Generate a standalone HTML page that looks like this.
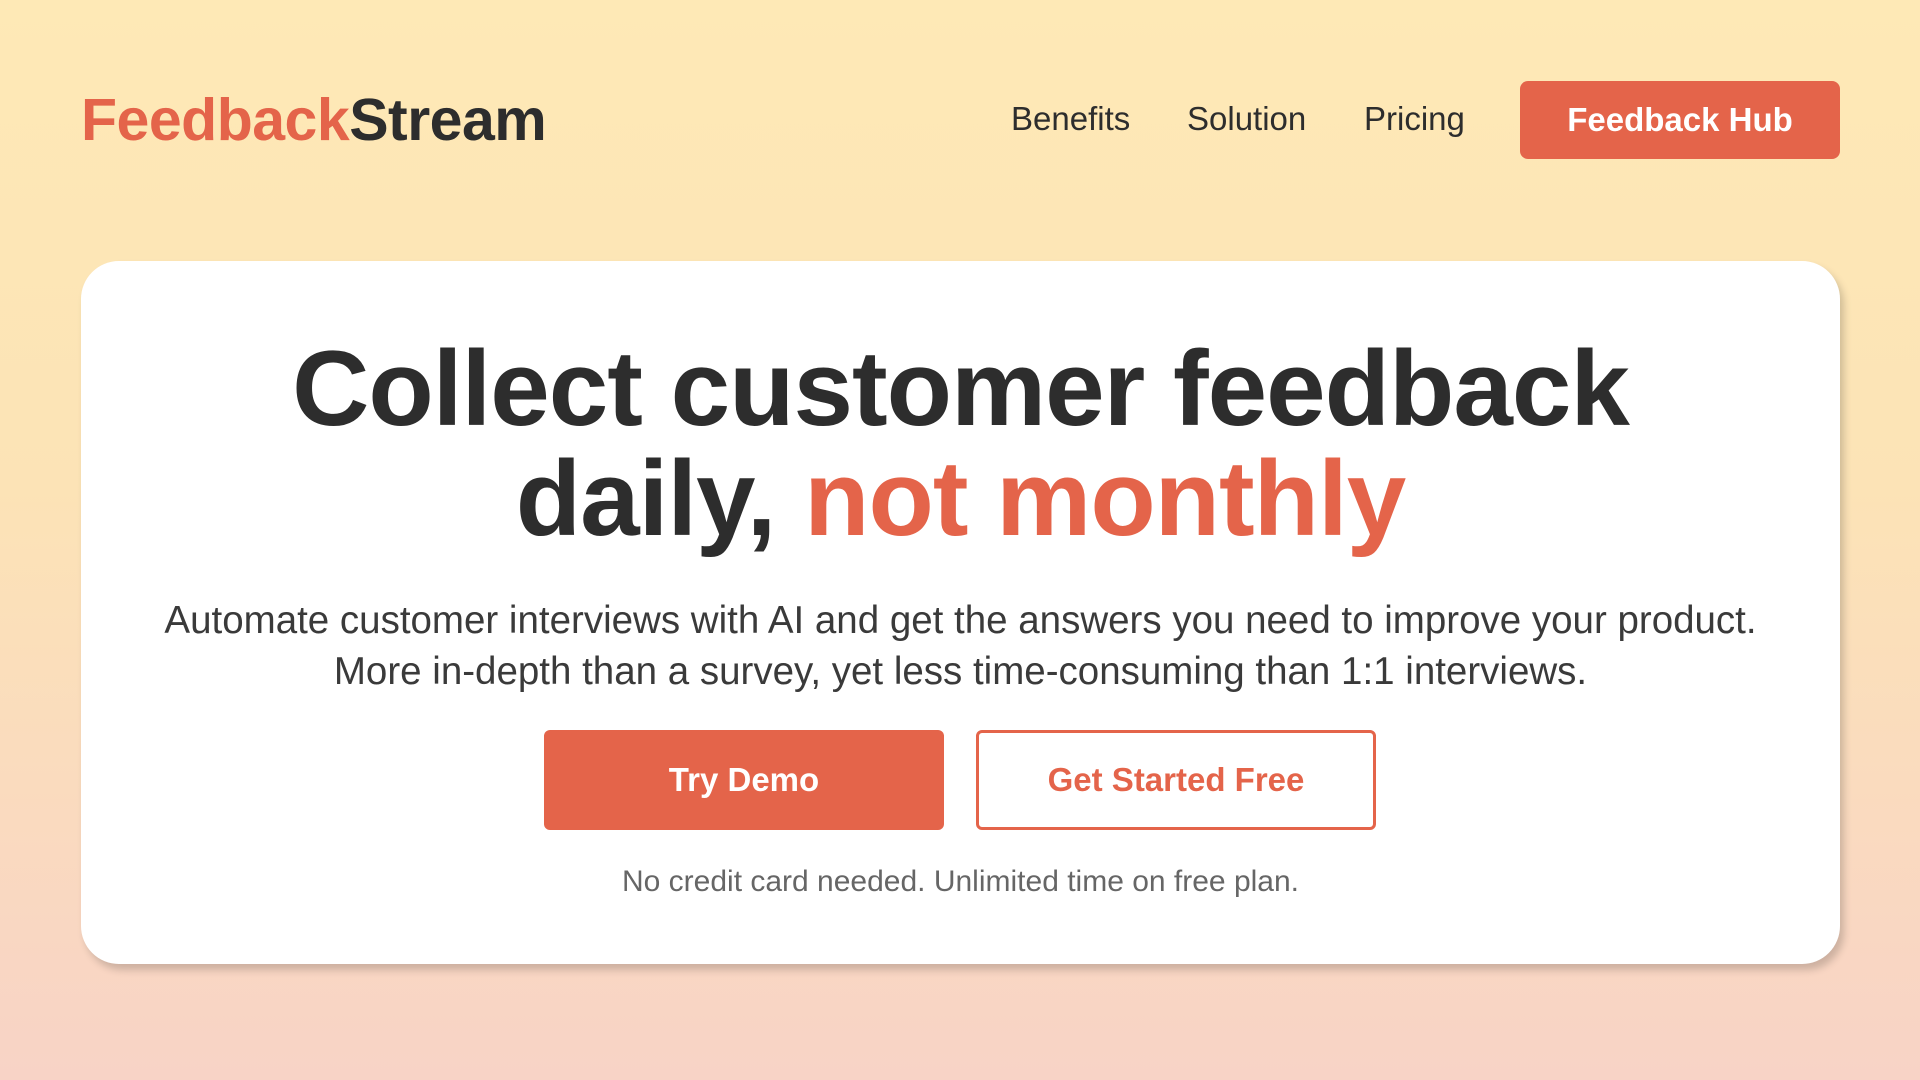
<!DOCTYPE html>
<html><head><meta charset="utf-8"><style>
*{margin:0;padding:0;box-sizing:border-box}
html,body{width:1920px;height:1080px;overflow:hidden}
body{font-family:"Liberation Sans",sans-serif;background:linear-gradient(180deg,#fee9b6 0%,#fce3b6 45%,#f8d3c6 100%);color:#2d2d2d;position:relative}
.logo{position:absolute;left:81px;top:86px;font-size:59px;font-weight:bold;letter-spacing:-0.5px}
.logo span{color:#e4644a}
.nav{position:absolute;top:100px;font-size:33px;color:#2d2d2d}
.hub{position:absolute;left:1520px;top:81px;width:320px;height:78px;background:#e4644a;color:#fff;border-radius:8px;font-size:33px;font-weight:bold;display:flex;align-items:center;justify-content:center}
.card{position:absolute;left:81px;top:261px;width:1759px;height:703px;background:#fff;border-radius:38px;box-shadow:4px 6px 8px rgba(0,0,0,.18);text-align:center}
h1{font-size:107px;line-height:110px;margin-top:72px;font-weight:bold;color:#2d2d2d;letter-spacing:-1px}
h1 span{color:#e4644a}
.sub{font-size:38.5px;line-height:51px;margin-top:42px;color:#3a3a3a}
.btn{position:absolute;top:469px;width:400px;height:100px;border-radius:6px;font-size:33px;font-weight:bold;display:flex;align-items:center;justify-content:center}
.b1{left:463px;background:#e4644a;color:#fff}
.b2{left:895px;border:3px solid #e4644a;color:#e4644a;background:#fff}
.note{position:absolute;top:604px;left:0;width:100%;font-size:30px;color:#666}
</style></head><body>
<div class="logo"><span>Feedback</span>Stream</div>
<div class="nav" style="left:1011px">Benefits</div>
<div class="nav" style="left:1187px">Solution</div>
<div class="nav" style="left:1364px">Pricing</div>
<div class="hub">Feedback Hub</div>
<div class="card">
<h1>Collect customer feedback<br>daily, <span>not monthly</span></h1>
<p class="sub">Automate customer interviews with AI and get the answers you need to improve your product.<br>More in-depth than a survey, yet less time-consuming than 1:1 interviews.</p>
<div class="btn b1">Try Demo</div>
<div class="btn b2">Get Started Free</div>
<div class="note">No credit card needed. Unlimited time on free plan.</div>
</div>
</body></html>
